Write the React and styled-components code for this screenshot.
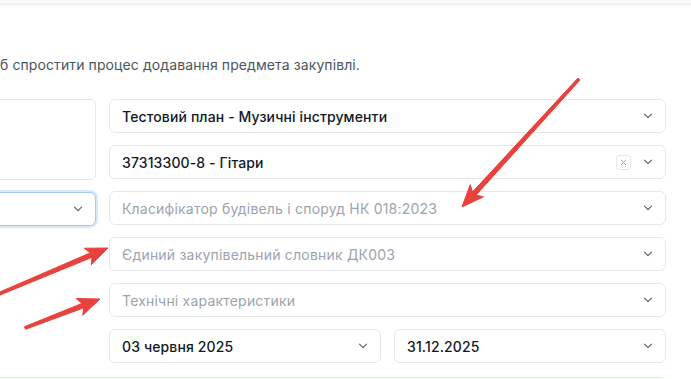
import React from 'react'
import styled, { createGlobalStyle } from 'styled-components'

const GlobalStyle = createGlobalStyle`
  html, body {
    margin: 0;
    padding: 0;
    background: #ffffff;
    overflow: hidden;
  }
  body {
    font-family: Inter, "Noto Sans", "Liberation Sans", sans-serif;
    width: 691px;
    height: 379px;
  }
`

const Page = styled.div`
  position: relative;
  width: 691px;
  height: 379px;
  overflow: hidden;
`

const TopBar = styled.div`
  height: 4px;
  background: #f7f8fa;
  border-bottom: 1px solid #e8eaee;
`

const Content = styled.div`
  padding-top: 50px;
`

const Description = styled.p`
  margin: 0;
  font-size: 14px;
  line-height: 20px;
  letter-spacing: 0.1px;
  color: #4b5563;
  white-space: nowrap;
`

const FormGrid = styled.div`
  display: grid;
  grid-template-columns: 136px 557px;
  column-gap: 13px;
  margin-top: 24px;
  margin-left: -40px;
  align-items: start;
`

const Column = styled.div`
  display: flex;
  flex-direction: column;
  gap: 12px;
`

const TextArea = styled.div`
  box-sizing: border-box;
  height: 81px;
  border: 1px solid #e5e7eb;
  border-radius: 6px;
  background: #fff;
`

const Field = styled.div`
  box-sizing: border-box;
  height: 34px;
  display: flex;
  align-items: center;
  padding: 0 12px;
  border: 1px solid ${p => (p.$focused ? '#a9c9f5' : '#e5e7eb')};
  box-shadow: ${p => (p.$focused ? '0 0 0 2px #d9e7fb' : 'none')};
  border-radius: 6px;
  background: #fff;
  gap: 12px;
`

const Value = styled.span`
  flex: 1;
  font-size: 14px;
  letter-spacing: ${p => (p.$placeholder ? '0.2px' : '0.12px')};
  font-weight: ${p => (p.$placeholder ? 400 : 500)};
  color: ${p => (p.$placeholder ? '#9ca3af' : '#111827')};
  white-space: nowrap;
  overflow: hidden;
`

const ClearButton = styled.span`
  box-sizing: border-box;
  width: 15px;
  height: 15px;
  border: 1px solid #e5e7eb;
  border-radius: 3px;
  display: flex;
  align-items: center;
  justify-content: center;
`

const Split = styled.div`
  display: grid;
  grid-template-columns: 1fr 1fr;
  column-gap: 13px;
`

const Notice = styled.div`
  margin-top: 14px;
  margin-left: -40px;
  width: 704px;
  height: 40px;
  border: 1px solid #d6f2cc;
  border-radius: 6px;
  background: #f6fdf3;
`

const Overlay = styled.svg`
  position: absolute;
  left: 0;
  top: 0;
  pointer-events: none;
`

const Chevron = () => (
  <svg width="10" height="6" viewBox="0 0 10 6" fill="none">
    <path d="M1.5 1.2l3.5 3.4 3.5-3.4" stroke="#555b66" strokeWidth="1.1" strokeLinecap="round" strokeLinejoin="round" />
  </svg>
)

const Select = ({ value, placeholder, clearable, focused }) => (
  <Field $focused={focused}>
    <Value $placeholder={!value}>{value || placeholder}</Value>
    {clearable && (
      <ClearButton>
        <svg width="7" height="7" viewBox="0 0 7 7">
          <path d="M1.2 1.2l4.6 4.6M5.8 1.2L1.2 5.8" stroke="#9ca3af" strokeWidth="1" strokeLinecap="round" />
        </svg>
      </ClearButton>
    )}
    <Chevron />
  </Field>
)

const arrows = [
  { tail: [579, 79], tip: [462, 207] },
  { tail: [-6, 296], tip: [108, 248] },
  { tail: [25, 328], tip: [100, 299] },
]

const Arrow = ({ tail, tip }) => {
  const dx = tip[0] - tail[0]
  const dy = tip[1] - tail[1]
  const len = Math.hypot(dx, dy)
  const ux = dx / len
  const uy = dy / len
  const nx = -uy
  const ny = ux
  const bx = tip[0] - ux * 22
  const by = tip[1] - uy * 22
  const mx = tip[0] - ux * 17
  const my = tip[1] - uy * 17
  const pts = [
    [tip[0], tip[1]],
    [bx + nx * 9, by + ny * 9],
    [mx, my],
    [bx - nx * 9, by - ny * 9],
  ]
  return (
    <g>
      <path
        d={`M${tail[0] + nx * 1.4} ${tail[1] + ny * 1.4} L${mx + nx * 2.4} ${my + ny * 2.4} L${mx - nx * 2.4} ${my - ny * 2.4} L${tail[0] - nx * 1.4} ${tail[1] - ny * 1.4} Z`}
        fill="#e8413e"
        stroke="#e8413e"
        strokeWidth="1"
        strokeLinejoin="round"
      />
      <polygon points={pts.map(p => p.join(',')).join(' ')} fill="#e8413e" stroke="#e8413e" strokeWidth="1" strokeLinejoin="round" />
    </g>
  )
}

export default function App() {
  return (
    <Page>
      <GlobalStyle />
      <TopBar />
      <Content>
        <Description>б спростити процес додавання предмета закупівлі.</Description>
        <FormGrid>
          <Column>
            <TextArea />
            <Select focused />
          </Column>
          <Column>
            <Select value="Тестовий план - Музичні інструменти" />
            <Select value="37313300-8 - Гітари" clearable />
            <Select placeholder="Класифікатор будівель і споруд НК 018:2023" />
            <Select placeholder="Єдиний закупівельний словник ДК003" />
            <Select placeholder="Технічні характеристики" />
            <Split>
              <Select value="03 червня 2025" />
              <Select value="31.12.2025" />
            </Split>
          </Column>
        </FormGrid>
        <Notice />
      </Content>
      <Overlay width="691" height="379" viewBox="0 0 691 379">
        {arrows.map((a, i) => (
          <Arrow key={i} {...a} />
        ))}
      </Overlay>
    </Page>
  )
}
